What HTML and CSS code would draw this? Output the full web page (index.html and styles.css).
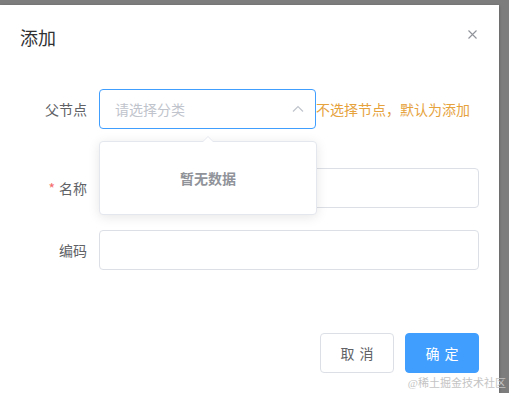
FILE: index.html
```html
<!DOCTYPE html>
<html>
<head>
    <title>添加</title>
    <link rel="stylesheet" href="styles.css">
</head>
<body>
    <div class="dialog">
        <div class="dialog-header">
            <span class="dialog-title">添加</span>
            <span class="dialog-close">
                <svg width="9" height="9" viewBox="0 0 9 9"><path d="M0.5 0.5L8.5 8.5M8.5 0.5L0.5 8.5" stroke="#909399" stroke-width="1.1"/></svg>
            </span>
        </div>

        <div class="dialog-body">
            <div class="form-item first">
                <label class="form-label">父节点</label>
                <div class="form-content">
                    <div class="select">
                        <span class="placeholder">请选择分类</span>
                        <svg class="arrow" width="12" height="8" viewBox="0 0 12 8"><path d="M1 6.5L6 1.5L11 6.5" fill="none" stroke="#c0c4cc" stroke-width="1.2"/></svg>
                        <div class="popper">
                            <span class="popper-arrow"></span>
                            <p class="empty">暂无数据</p>
                        </div>
                    </div>
                    <span class="hint">不选择节点，默认为添加</span>
                </div>
            </div>
            <div class="form-item">
                <label class="form-label"><span class="star">*</span>名称</label>
                <div class="form-content">
                    <input class="input" type="text">
                </div>
            </div>
            <div class="form-item">
                <label class="form-label">编码</label>
                <div class="form-content">
                    <input class="input" type="text">
                </div>
            </div>
        </div>

        <div class="dialog-footer">
            <button class="btn">取 消</button>
            <button class="btn primary">确 定</button>
        </div>
    </div>
    <div class="watermark">@稀土掘金技术社区</div>
</body>
</html>
```

FILE: styles.css
```css
body {
    margin: 0;
    padding-top: 5px;
    height: 393px;
    box-sizing: border-box;
    background-color: #7d7d7d; /* 遮罩层 */
    font-family: "Noto Sans CJK SC", "Noto Sans", sans-serif;
    overflow: hidden;
    position: relative;
}
.dialog {
    width: 499px;
    height: 388px;
    background-color: white;
    box-shadow: 0 1px 3px rgba(0, 0, 0, 0.3);
}
.dialog-header {
    display: flex;
    justify-content: space-between;
    align-items: flex-start;
    padding: 18px 22px 0 20px;
    height: 28px;
}
.dialog-title {
    font-size: 18px;
    color: #303133;
    line-height: 28px;
}
.dialog-close {
    display: flex;
    margin-top: 7px;
}
.dialog-body {
    padding: 38px 20px 0 19px;
}
.form-item {
    display: flex;
    align-items: center;
    margin-bottom: 22px;
}
.form-item.first {
    margin-bottom: 39px;
}
.form-label {
    width: 68px;
    padding-right: 12px;
    text-align: right;
    font-size: 14px;
    color: #606266;
    line-height: 40px;
}
.star {
    color: #f56c6c;
    margin-right: 4px;
}
.form-content {
    flex: 1;
    display: flex;
    align-items: center;
}
.select {
    position: relative;
    width: 217px;
    height: 40px;
    box-sizing: border-box;
    border: 1px solid #409eff;
    border-radius: 4px;
    display: flex;
    align-items: center;
    justify-content: space-between;
    padding: 0 11px 0 15px;
}
.placeholder {
    font-size: 14px;
    color: #c0c4cc;
}
.hint {
    font-size: 14px;
    color: #e6a23c;
    white-space: nowrap;
}
.popper {
    position: absolute;
    top: 51px;
    left: -1px;
    width: 218px;
    height: 74px;
    box-sizing: border-box;
    background: white;
    border: 1px solid #e4e7ed;
    border-radius: 4px;
    box-shadow: 0 2px 12px rgba(0, 0, 0, 0.1);
    display: flex;
    align-items: center;
    justify-content: center;
    z-index: 2;
}
.popper-arrow {
    position: absolute;
    top: -6px;
    left: 102px;
    width: 0;
    height: 0;
    border-left: 6px solid transparent;
    border-right: 6px solid transparent;
    border-bottom: 6px solid #e4e7ed;
}
.popper-arrow::after {
    content: "";
    position: absolute;
    top: 1px;
    left: -6px;
    border-left: 6px solid transparent;
    border-right: 6px solid transparent;
    border-bottom: 6px solid white;
}
.empty {
    margin: 0;
    font-size: 14px;
    font-weight: bold;
    color: #909399;
}
.input {
    width: 100%;
    height: 40px;
    box-sizing: border-box;
    border: 1px solid #dcdfe6;
    border-radius: 4px;
    outline: none;
}
.dialog-footer {
    display: flex;
    justify-content: flex-end;
    gap: 11px;
    padding: 41px 20px 0 20px;
}
.btn {
    width: 74px;
    height: 40px;
    border: 1px solid #dcdfe6;
    border-radius: 4px;
    background: white;
    color: #606266;
    font-size: 14px;
    font-family: "Noto Sans CJK SC", sans-serif;
    word-spacing: 2px;
}
.btn.primary {
    background: #409eff;
    border-color: #409eff;
    color: white;
}
.watermark {
    position: absolute;
    right: 3px;
    bottom: 3px;
    font-size: 11px;
    color: #c4c4c4;
    font-family: "Liberation Serif", "Noto Sans CJK SC", serif;
}
```
